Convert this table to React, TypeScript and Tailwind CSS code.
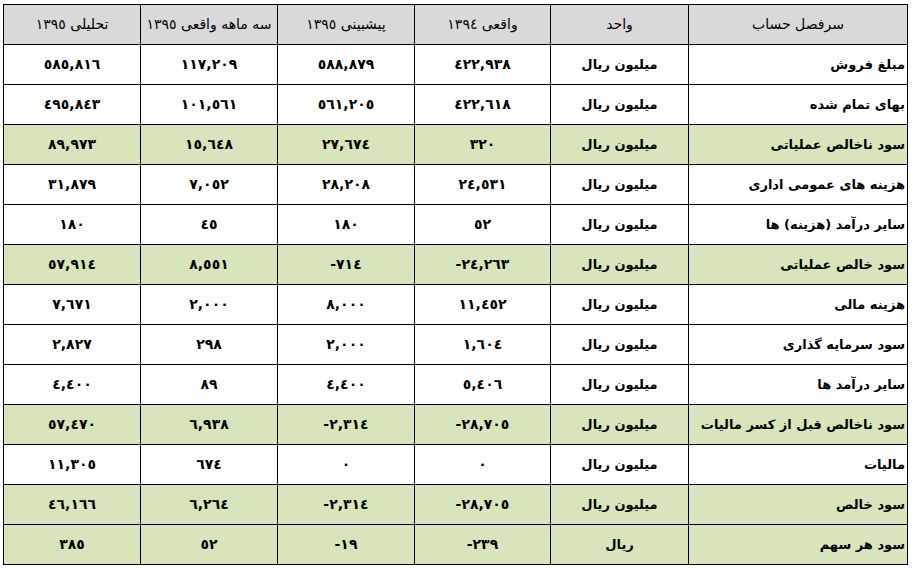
const toAr = (s: string) => s.replace(/[0-9]/g, (d) => "٠١٢٣٤٥٦٧٨٩"[Number(d)]);

type Row = { label: string; unit: string; values: string[]; green?: boolean };

const rows: Row[] = [
  { label: "مبلغ فروش", unit: "میلیون ریال", values: ["422,938", "588,879", "117,209", "585,816"] },
  { label: "بهای تمام شده", unit: "میلیون ریال", values: ["422,618", "561,205", "101,561", "495,843"] },
  { label: "سود ناخالص عملیاتی", unit: "میلیون ریال", values: ["320", "27,674", "15,648", "89,973"], green: true },
  { label: "هزینه های عمومی اداری", unit: "میلیون ریال", values: ["24,531", "28,208", "7,052", "31,879"] },
  { label: "سایر درآمد (هزینه) ها", unit: "میلیون ریال", values: ["52", "180", "45", "180"] },
  { label: "سود خالص عملیاتی", unit: "میلیون ریال", values: ["-24,263", "-714", "8,551", "57,914"], green: true },
  { label: "هزینه مالی", unit: "میلیون ریال", values: ["11,452", "8,000", "2,000", "7,671"] },
  { label: "سود سرمایه گذاری", unit: "میلیون ریال", values: ["1,604", "2,000", "298", "2,827"] },
  { label: "سایر درآمد ها", unit: "میلیون ریال", values: ["5,406", "4,400", "89", "4,400"] },
  { label: "سود ناخالص قبل از کسر مالیات", unit: "میلیون ریال", values: ["-28,705", "-2,314", "6,938", "57,470"], green: true },
  { label: "مالیات", unit: "میلیون ریال", values: ["0", "0", "674", "11,305"] },
  { label: "سود خالص", unit: "میلیون ریال", values: ["-28,705", "-2,314", "6,264", "46,166"], green: true },
  { label: "سود هر سهم", unit: "ریال", values: ["-239", "-19", "52", "385"], green: true },
];

const headers = ["سرفصل حساب", "واحد", "واقعی 1394", "پیشبینی 1395", "سه ماهه واقعی 1395", "تحلیلی 1395"];

export default function App() {
  return (
    <div className="min-h-screen bg-white pt-[4px] pl-[3px]" style={{ fontFamily: '"DejaVu Sans", sans-serif' }}>
      <table dir="rtl" className="w-[905px] table-fixed border-collapse text-[14px] text-black">
        <colgroup>
          <col className="w-[219px]" />
          <col className="w-[138px]" />
          <col className="w-[136px]" />
          <col className="w-[137px]" />
          <col className="w-[137px]" />
          <col className="w-[137px]" />
        </colgroup>
        <thead>
          <tr className="h-[40px] bg-[#d9d9d9]">
            {headers.map((h) => (
              <th key={h} className="border border-black text-center font-normal">
                {toAr(h)}
              </th>
            ))}
          </tr>
        </thead>
        <tbody>
          {rows.map((r) => (
            <tr key={r.label} className={r.green ? "h-[40px] bg-[#d8e4bc]" : "h-[40px] bg-white"}>
              <td className="whitespace-nowrap border border-black pr-[2px] text-right text-[13px] font-bold">{r.label}</td>
              <td className="border border-black text-center text-[13px] font-bold">{r.unit}</td>
              {r.values.map((v, i) => (
                <td key={i} className="border border-black text-center font-bold">
                  <span dir="ltr">{toAr(v)}</span>
                </td>
              ))}
            </tr>
          ))}
        </tbody>
      </table>
    </div>
  );
}
